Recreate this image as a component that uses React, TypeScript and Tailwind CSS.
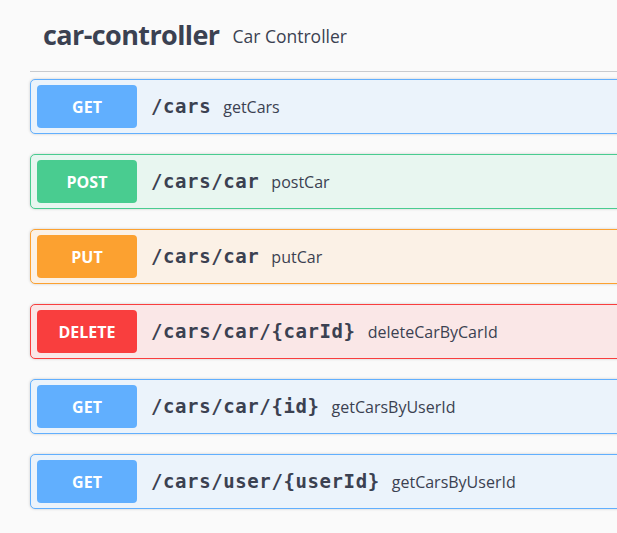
const ops = [
  { method: "GET", path: "/cars", summary: "getCars", tone: "get" },
  { method: "POST", path: "/cars/car", summary: "postCar", tone: "post" },
  { method: "PUT", path: "/cars/car", summary: "putCar", tone: "put" },
  { method: "DELETE", path: "/cars/car/{carId}", summary: "deleteCarByCarId", tone: "delete" },
  { method: "GET", path: "/cars/car/{id}", summary: "getCarsByUserId", tone: "get" },
  { method: "GET", path: "/cars/user/{userId}", summary: "getCarsByUserId", tone: "get" },
] as const;

const tones = {
  get: { block: "border-[#61affe] bg-[#ebf3fb]", badge: "bg-[#61affe]" },
  post: { block: "border-[#49cc90] bg-[#e8f6f0]", badge: "bg-[#49cc90]" },
  put: { block: "border-[#fca130] bg-[#fbf1e6]", badge: "bg-[#fca130]" },
  delete: { block: "border-[#f93e3e] bg-[#fae7e7]", badge: "bg-[#f93e3e]" },
};

export default function App() {
  return (
    <div className="min-h-screen w-full overflow-hidden bg-[#fafafa] text-[#3b4151] [font-family:'Open_Sans',sans-serif]">
      <div className="w-[660px] pl-[30px]">
        <div className="flex h-[72px] items-center border-b border-[#c9cbcf] pl-[13px]">
          <h3 className="text-[27px] font-bold tracking-[-0.6px]">car-controller</h3>
          <span className="ml-[13px] pt-[1px] text-[17.5px]">Car Controller</span>
        </div>
        <div className="mt-[7px] flex flex-col gap-[20px]">
          {ops.map((op, i) => {
            const tone = tones[op.tone];
            return (
              <div
                key={i}
                className={`flex items-center rounded-[5px] border py-[5px] pl-[6px] shadow-[0_0_3px_rgba(0,0,0,0.19)] ${tone.block}`}
              >
                <span
                  className={`flex h-[43px] w-[100px] items-center justify-center rounded-[4px] text-[16px] font-bold text-white ${tone.badge}`}
                >
                  {op.method}
                </span>
                <span className="ml-[14px] text-[19px] font-bold [font-family:'DejaVu_Sans_Mono',monospace] tracking-[0.6px]">
                  {op.path}
                </span>
                <span className="ml-[12px] text-[16px]">{op.summary}</span>
              </div>
            );
          })}
        </div>
      </div>
    </div>
  );
}
